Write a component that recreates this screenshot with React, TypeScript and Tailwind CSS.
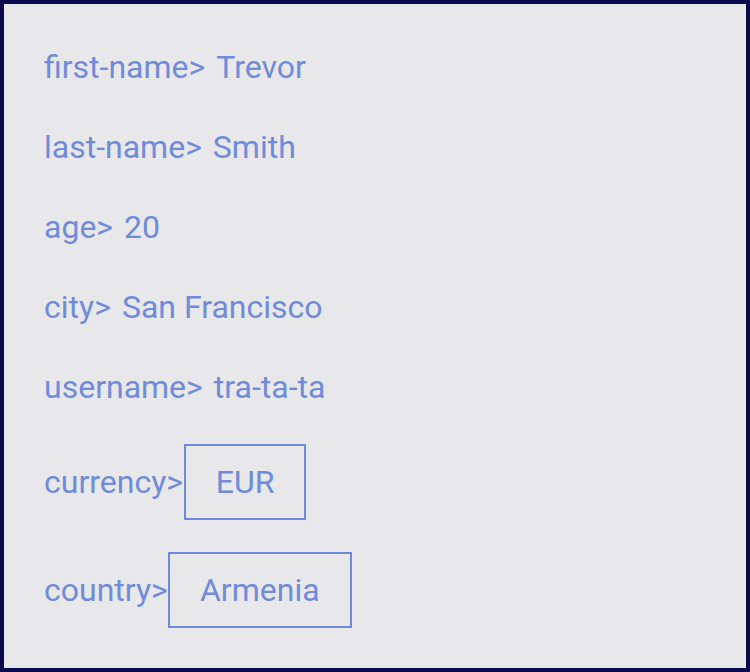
export default function App() {
  const rows = [
    ["first-name>", "Trevor"],
    ["last-name>", "Smith"],
    ["age>", "20"],
    ["city>", "San Francisco"],
    ["username>", "tra-ta-ta"],
  ];
  return (
    <div
      className="w-[750px] h-[672px] border-4 border-[#0a0a4c] bg-[#e8e8ea] pl-[40px] pt-[23px] text-[#6f8bd9] text-[32px]"
      style={{ fontFamily: "Roboto, sans-serif" }}
    >
      {rows.map(([k, v]) => (
        <div key={k} className="h-[80px] flex items-center">
          <span>{k}</span>
          <span className="ml-[11px]">{v}</span>
        </div>
      ))}
      <div className="mt-[17px] flex items-center">
        <span>currency&gt;</span>
        <div className="ml-[1px] h-[76px] w-[122px] border-2 border-[#6f8bd9] flex items-center justify-center">
          EUR
        </div>
      </div>
      <div className="mt-[32px] flex items-center">
        <span>country&gt;</span>
        <div className="h-[76px] w-[184px] border-2 border-[#6f8bd9] flex items-center justify-center">
          Armenia
        </div>
      </div>
    </div>
  );
}
